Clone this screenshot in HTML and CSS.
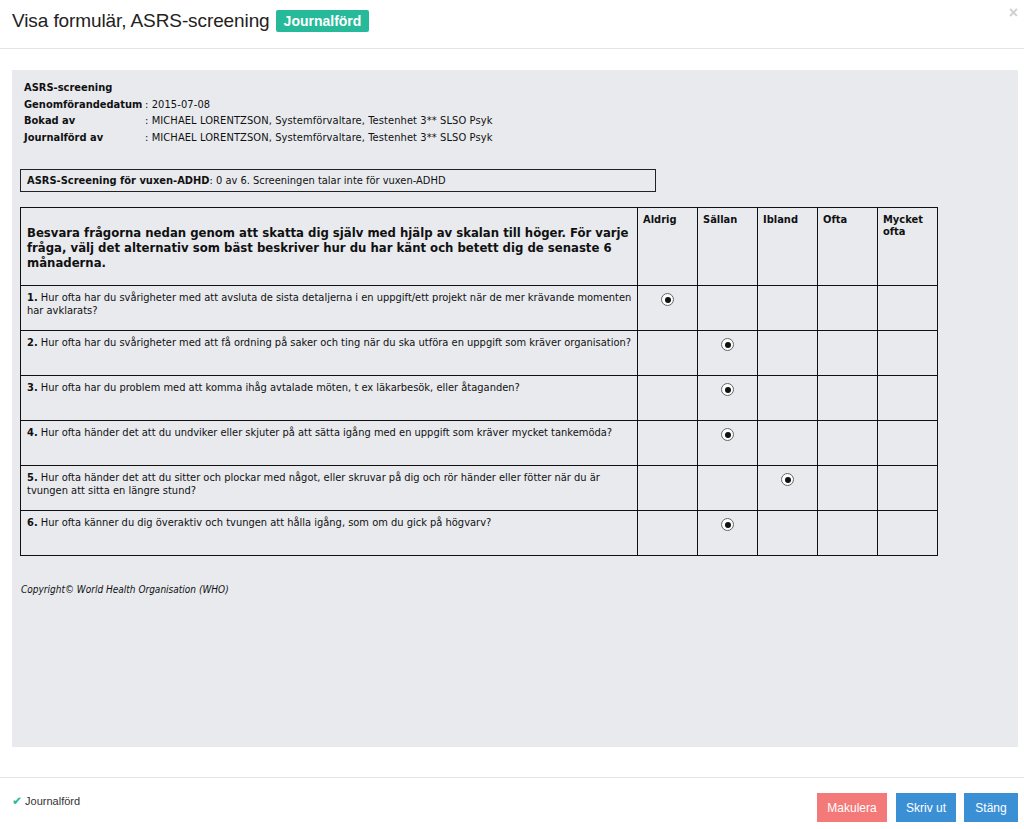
FILE: index.html
```html
<!DOCTYPE html>
<html lang="sv">
<head>
<meta charset="utf-8">
<title>Visa formulär, ASRS-screening</title>
<link rel="stylesheet" href="styles.css">
</head>
<body>
<div class="modal">
  <div class="modal-header">
    <h1 class="title">Visa formulär, ASRS-screening</h1>
    <span class="badge">Journalförd</span>
    <span class="close">×</span>
  </div>
  <div class="modal-body">
    <div class="sheet">
      <div class="info">
        <div class="info-title">ASRS-screening</div>
        <div class="info-row"><span class="lbl">Genomförandedatum</span><span class="val">: 2015-07-08</span></div>
        <div class="info-row"><span class="lbl">Bokad av</span><span class="val">: MICHAEL LORENTZSON, Systemförvaltare, Testenhet 3** SLSO Psyk</span></div>
        <div class="info-row"><span class="lbl">Journalförd av</span><span class="val">: MICHAEL LORENTZSON, Systemförvaltare, Testenhet 3** SLSO Psyk</span></div>
      </div>
      <div class="result"><b>ASRS-Screening för vuxen-ADHD</b>: 0 av 6. Screeningen talar inte för vuxen-ADHD</div>
      <table class="grid">
        <thead>
          <tr>
            <th class="q-head">Besvara frågorna nedan genom att skatta dig själv med hjälp av skalan till höger. För varje fråga, välj det alternativ som bäst beskriver hur du har känt och betett dig de senaste 6 månaderna.</th>
            <th class="opt">Aldrig</th>
            <th class="opt">Sällan</th>
            <th class="opt">Ibland</th>
            <th class="opt">Ofta</th>
            <th class="opt">Mycket ofta</th>
          </tr>
        </thead>
        <tbody>
          <tr>
            <td class="q"><p><b>1.</b> Hur ofta har du svårigheter med att avsluta de sista detaljerna i en uppgift/ett projekt när de mer krävande momenten har avklarats?</p></td>
            <td class="r"><span class="radio"></span></td><td class="r"></td><td class="r"></td><td class="r"></td><td class="r"></td>
          </tr>
          <tr>
            <td class="q"><p><b>2.</b> Hur ofta har du svårigheter med att få ordning på saker och ting när du ska utföra en uppgift som kräver organisation?</p></td>
            <td class="r"></td><td class="r"><span class="radio"></span></td><td class="r"></td><td class="r"></td><td class="r"></td>
          </tr>
          <tr>
            <td class="q"><p><b>3.</b> Hur ofta har du problem med att komma ihåg avtalade möten, t ex läkarbesök, eller åtaganden?</p></td>
            <td class="r"></td><td class="r"><span class="radio"></span></td><td class="r"></td><td class="r"></td><td class="r"></td>
          </tr>
          <tr>
            <td class="q"><p><b>4.</b> Hur ofta händer det att du undviker eller skjuter på att sätta igång med en uppgift som kräver mycket tankemöda?</p></td>
            <td class="r"></td><td class="r"><span class="radio"></span></td><td class="r"></td><td class="r"></td><td class="r"></td>
          </tr>
          <tr>
            <td class="q"><p><b>5.</b> Hur ofta händer det att du sitter och plockar med något, eller skruvar på dig och rör händer eller fötter när du är tvungen att sitta en längre stund?</p></td>
            <td class="r"></td><td class="r"></td><td class="r"><span class="radio"></span></td><td class="r"></td><td class="r"></td>
          </tr>
          <tr>
            <td class="q"><p><b>6.</b> Hur ofta känner du dig överaktiv och tvungen att hålla igång, som om du gick på högvarv?</p></td>
            <td class="r"></td><td class="r"><span class="radio"></span></td><td class="r"></td><td class="r"></td><td class="r"></td>
          </tr>
        </tbody>
      </table>
      <div class="copyright">Copyright© World Health Organisation (WHO)</div>
    </div>
  </div>
  <div class="modal-footer">
    <div class="status"><span class="check">✔</span> Journalförd</div>
    <div class="buttons">
      <button class="btn btn-danger btn-void">Makulera</button>
      <button class="btn btn-primary btn-print">Skriv ut</button>
      <button class="btn btn-primary btn-close">Stäng</button>
    </div>
  </div>
</div>
</body>
</html>
```
FILE: styles.css
```css
* { box-sizing: border-box; }
html, body { margin: 0; padding: 0; background: #fff; }
body {
  font-family: "Liberation Sans", Arial, sans-serif;
  color: #333;
  width: 1024px;
  height: 829px;
  overflow: hidden;
}
.modal { display: flex; flex-direction: column; height: 829px; }

.modal-header {
  height: 49px;
  border-bottom: 1px solid #e5e5e5;
  display: flex;
  align-items: center;
  padding: 0 12px 6px 12px;
  position: relative;
}
.title {
  margin: 0;
  font-size: 19px;
  font-weight: normal;
  color: #222;
  letter-spacing: -0.1px;
}
.badge {
  margin-left: 6px;
  background: #26b99a;
  color: #fff;
  font-weight: bold;
  font-size: 14px;
  padding: 4px 8px;
  border-radius: 2px;
  line-height: 14px;
}
.close {
  position: absolute;
  right: 6px;
  top: 4px;
  font-size: 16px;
  font-weight: bold;
  color: #d0d0d0;
}

.modal-body { padding: 21px 6px 0 12px; }
.sheet {
  background: #e8eaee;
  height: 677px;
  padding: 10px 8px 0 8px;
  font-family: "DejaVu Sans Condensed", "DejaVu Sans", sans-serif;
  font-size: 11px;
  color: #111;
}
.info { margin-left: 4px; line-height: 16.6px; }
.info-title { font-weight: bold; }
.info-row { display: flex; }
.info-row .lbl { width: 121px; font-weight: bold; }
.info-row .val { letter-spacing: 0.1px; }

.result {
  margin-top: 23px;
  width: 636px;
  height: 23px;
  border: 1px solid #222;
  padding: 0 6px;
  line-height: 21px;
}

.grid {
  margin-top: 15px;
  border-collapse: collapse;
  width: 917px;
  table-layout: fixed;
}
.grid th, .grid td { border: 1px solid #111; }
.grid .q-head {
  width: 617px;
  height: 78px;
  text-align: left;
  vertical-align: middle;
  font-size: 13px;
  font-weight: bold;
  line-height: 15px;
  padding: 2px 4px 0 6px;
}
.grid .opt {
  width: 60px;
  text-align: left;
  vertical-align: top;
  font-weight: bold;
  padding: 6px 5px;
  line-height: 12px;
}
.grid td { height: 45px; vertical-align: top; }
.grid .q { padding: 5px 2px 5px 6px; line-height: 13px; }
.grid .q p { margin: 0; }
.grid .r { text-align: center; padding-top: 7px; }

.radio {
  display: inline-block;
  width: 13px;
  height: 13px;
  border-radius: 50%;
  border: 1px solid #666;
  background: #fff;
  position: relative;
  vertical-align: top;
}
.radio::after {
  content: "";
  position: absolute;
  left: 2.5px;
  top: 2.5px;
  width: 6px;
  height: 6px;
  border-radius: 50%;
  background: #111;
}

.copyright {
  margin-top: 28px;
  font-style: italic;
  font-size: 10px;
  margin-left: 1px;
}

.modal-footer {
  margin-top: 30px;
  border-top: 1px solid #e5e5e5;
  display: flex;
  justify-content: space-between;
  align-items: flex-start;
  padding: 15px 6px 0 12px;
}
.status { font-size: 11px; color: #333; margin-top: 1px; }
.check { color: #26b99a; font-size: 12px; }
.buttons { display: flex; gap: 8px; }
.btn {
  border: none;
  color: #fff;
  font-family: "Liberation Sans", Arial, sans-serif;
  font-size: 12px;
  height: 29px;
  padding: 0;
  border-radius: 0;
  margin: 0;
  text-align: center;
}
.btn-danger { background: #f47a7a; }
.btn-primary { background: #3a8fd5; }
.btn-void { width: 70px; margin-right: 1px; }
.btn-print { width: 60px; }
.btn-close { width: 54px; }
```
